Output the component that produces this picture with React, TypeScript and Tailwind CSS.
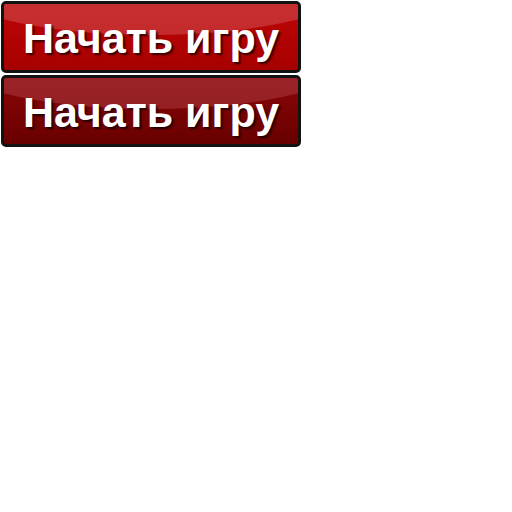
import React from "react";

function GameButton({ dark }: { dark?: boolean }) {
	return (
		<div
			className={
				"relative w-[300px] h-[72px] rounded-[5px] border-[3px] border-[#121212] overflow-hidden flex items-center justify-center " +
				(dark
					? "bg-gradient-to-b from-[#8c0608] to-[#680000]"
					: "bg-gradient-to-b from-[#be0606] to-[#a60000]")
			}
		>
			{/* glossy highlight */}
			<div
				className={
					"absolute -left-[60px] -right-[60px] -top-[75px] h-[106px] rounded-[50%] bg-gradient-to-b " +
					(dark ? "from-[#a42a2e] to-[#952024]" : "from-[#cc3a3c] to-[#c42a2c]")
				}
			/>
			<span className="relative font-['Liberation_Sans',sans-serif] font-bold text-[43px] leading-none text-white pt-[3px] [text-shadow:2px_2px_2px_rgba(0,0,0,0.7)]">
				Начать игру
			</span>
		</div>
	);
}

export default function App() {
	return (
		<div className="flex flex-col gap-[2px] pt-[1px] pl-[1px] bg-white w-[512px] h-[512px]">
			<GameButton />
			<GameButton dark />
		</div>
	);
}
